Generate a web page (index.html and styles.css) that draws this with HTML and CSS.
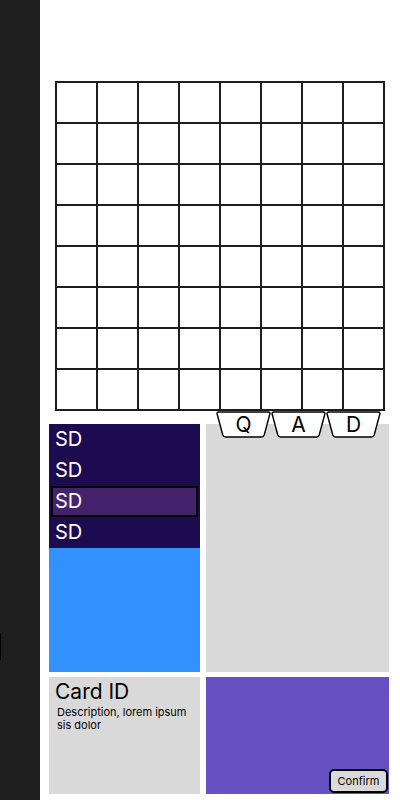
FILE: index.html
```html
<!DOCTYPE html>
<html>
<head>
<meta charset="utf-8">
<link rel="stylesheet" href="styles.css">
</head>
<body>
<aside class="sidebar"><div class="mark"></div></aside>
<main class="main">
  <div class="board">
    <div class="cell"></div><div class="cell"></div><div class="cell"></div><div class="cell"></div><div class="cell"></div><div class="cell"></div><div class="cell"></div><div class="cell"></div>
    <div class="cell"></div><div class="cell"></div><div class="cell"></div><div class="cell"></div><div class="cell"></div><div class="cell"></div><div class="cell"></div><div class="cell"></div>
    <div class="cell"></div><div class="cell"></div><div class="cell"></div><div class="cell"></div><div class="cell"></div><div class="cell"></div><div class="cell"></div><div class="cell"></div>
    <div class="cell"></div><div class="cell"></div><div class="cell"></div><div class="cell"></div><div class="cell"></div><div class="cell"></div><div class="cell"></div><div class="cell"></div>
    <div class="cell"></div><div class="cell"></div><div class="cell"></div><div class="cell"></div><div class="cell"></div><div class="cell"></div><div class="cell"></div><div class="cell"></div>
    <div class="cell"></div><div class="cell"></div><div class="cell"></div><div class="cell"></div><div class="cell"></div><div class="cell"></div><div class="cell"></div><div class="cell"></div>
    <div class="cell"></div><div class="cell"></div><div class="cell"></div><div class="cell"></div><div class="cell"></div><div class="cell"></div><div class="cell"></div><div class="cell"></div>
    <div class="cell"></div><div class="cell"></div><div class="cell"></div><div class="cell"></div><div class="cell"></div><div class="cell"></div><div class="cell"></div><div class="cell"></div>
  </div>
  <section class="panels">
    <div class="left-col">
      <ul class="list">
        <li class="item">SD</li>
        <li class="item">SD</li>
        <li class="item selected">SD</li>
        <li class="item">SD</li>
      </ul>
      <div class="blue"></div>
    </div>
    <div class="view">
      <div class="tabs">
        <div class="tab"><svg class="tab-shape" width="55" height="27" viewBox="0 0 55 27"><path d="M1,2.5 Q1,1 2.5,1 L52.5,1 Q54,1 54,2.5 L48.2,24 Q47.5,26 45.5,26 L9.5,26 Q7.5,26 6.8,24 Z" fill="#fff" stroke="#000" stroke-width="1.4" stroke-linejoin="round"/></svg><span class="tab-label">Q</span></div>
        <div class="tab"><svg class="tab-shape" width="55" height="27" viewBox="0 0 55 27"><path d="M1,2.5 Q1,1 2.5,1 L52.5,1 Q54,1 54,2.5 L48.2,24 Q47.5,26 45.5,26 L9.5,26 Q7.5,26 6.8,24 Z" fill="#fff" stroke="#000" stroke-width="1.4" stroke-linejoin="round"/></svg><span class="tab-label">A</span></div>
        <div class="tab"><svg class="tab-shape" width="55" height="27" viewBox="0 0 55 27"><path d="M1,2.5 Q1,1 2.5,1 L52.5,1 Q54,1 54,2.5 L48.2,24 Q47.5,26 45.5,26 L9.5,26 Q7.5,26 6.8,24 Z" fill="#fff" stroke="#000" stroke-width="1.4" stroke-linejoin="round"/></svg><span class="tab-label">D</span></div>
      </div>
    </div>
    <div class="card">
      <h2 class="card-title">Card ID</h2>
      <p class="card-desc">Description, lorem ipsum sis dolor</p>
    </div>
    <div class="action">
      <button class="confirm">Confirm</button>
    </div>
  </section>
</main>
</body>
</html>
```
FILE: styles.css
```css
* { box-sizing: border-box; }
html, body { margin: 0; padding: 0; }
body {
  display: flex;
  width: 400px;
  height: 800px;
  background: #fff;
  font-family: Inter, "Noto Sans", sans-serif;
  overflow: hidden;
}
.sidebar {
  width: 40px;
  height: 800px;
  background: #1e1e1e;
  padding-top: 633px;
  flex-shrink: 0;
}
.mark {
  width: 1px;
  height: 27px;
  background: #000;
}
.main {
  flex: 1;
  display: flex;
  flex-direction: column;
}
.board {
  margin: 81px 0 0 15px;
  width: 330px;
  height: 330px;
  border: 1px solid #1e1e1e;
  display: grid;
  grid-template-columns: repeat(8, 41px);
  grid-template-rows: repeat(8, 41px);
}
.cell {
  border: 1px solid #1e1e1e;
}
.panels {
  margin: 13px 0 0 9px;
  width: 340px;
  display: grid;
  grid-template-columns: 151px 183px;
  grid-template-rows: 248px 117px;
  column-gap: 6px;
  row-gap: 5px;
}
.left-col {
  display: flex;
  flex-direction: column;
}
.list {
  list-style: none;
  margin: 0;
  padding: 0;
  background: #1d0b4f;
}
.item {
  height: 31px;
  line-height: 31px;
  padding-left: 6px;
  color: #fff;
  font-size: 20px;
}
.item.selected {
  margin: 0 2px;
  padding-left: 2px;
  border: 2px solid #000;
  line-height: 27px;
  background: #45236c;
}
.blue {
  flex: 1;
  background: #3391ff;
}
.view {
  position: relative;
  background: #d9d9d9;
}
.tabs {
  position: absolute;
  top: -13px;
  left: 10px;
  display: flex;
}
.tab {
  position: relative;
  width: 55px;
  height: 27px;
}
.tab-shape {
  position: absolute;
  left: 0;
  top: 0;
  display: block;
}
.tab-label {
  position: relative;
  display: block;
  text-align: center;
  font-size: 21px;
  line-height: 27px;
  color: #000;
}
.card {
  background: #d9d9d9;
  padding: 4px 6px;
}
.card-title {
  margin: 0;
  font-weight: 400;
  font-size: 21px;
  line-height: 22px;
  color: #000;
}
.card-desc {
  margin: 3px 0 0 2px;
  font-size: 11px;
  line-height: 13px;
  color: #000;
  width: 140px;
}
.action {
  background: #6750c2;
  display: flex;
  justify-content: flex-end;
  align-items: flex-end;
  padding: 0 1px 1px 0;
}
.confirm {
  width: 59px;
  height: 24px;
  border: 2px solid #000;
  border-radius: 5px;
  background: #d9d9d9;
  font-family: Inter, "Noto Sans", sans-serif;
  font-size: 11px;
  color: #000;
  padding: 0;
}
```
